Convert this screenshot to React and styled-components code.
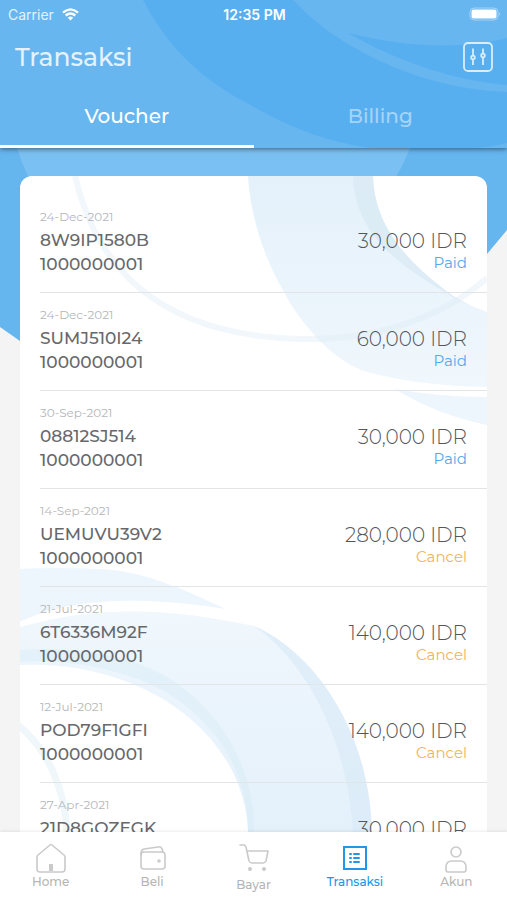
import { useState } from "react";
import styled, { createGlobalStyle } from "styled-components";

const GlobalStyle = createGlobalStyle`
    * {
        box-sizing: border-box;
    }

    body {
        margin: 0;
        background: #f4f4f4;
        font-family: Montserrat, Inter, "Open Sans", sans-serif;
    }

    button {
        font-family: inherit;
        background: none;
        border: 0;
        padding: 0;
        cursor: pointer;
    }
`;

const Screen = styled.div`
    display: flex;
    flex-direction: column;
    height: 100vh;
    overflow: hidden;
`;

const Backdrop = styled.svg`
    position: absolute;
    inset: 0;
    width: 100%;
    height: 100%;
    z-index: -1;
`;

const Header = styled.header`
    position: relative;
    z-index: 1;
    flex: none;
    isolation: isolate;
    color: #fff;
    box-shadow: 0 1px 5px rgba(0, 0, 0, 0.5);
`;

const StatusBar = styled.div`
    display: grid;
    grid-template-columns: 1fr auto 1fr;
    align-items: center;
    height: 28px;
    padding: 0 6px 0 8px;
    font-family: Inter, Roboto, sans-serif;
    font-size: 14px;
`;

const Carrier = styled.span`
    display: flex;
    align-items: center;
    gap: 8px;
    color: #e4f2fd;
`;

const Clock = styled.span`
    font-weight: 600;
`;

const Battery = styled.svg`
    justify-self: end;
`;

const TitleRow = styled.div`
    display: flex;
    align-items: center;
    justify-content: space-between;
    height: 58px;
    padding: 0 14px 0 15px;
`;

const Title = styled.h1`
    margin: 0;
    font-size: 25px;
    font-weight: 500;
    color: #e4f2fd;
`;

const FilterButton = styled.button`
    display: flex;
    color: #d8eefd;
`;

const Tabs = styled.div`
    display: flex;
    height: 62px;
`;

const Tab = styled.button`
    flex: 1;
    font-size: 20px;
    font-weight: 500;
    color: ${(props) => (props.$active ? "#fff" : "#a5d4f8")};
    border-bottom: 3px solid ${(props) => (props.$active ? "#fff" : "transparent")};
`;

const Content = styled.main`
    position: relative;
    isolation: isolate;
    flex: 1;
    min-height: 0;
    overflow: hidden;
    padding: 28px 20px 0;
`;

const Card = styled.section`
    position: relative;
    isolation: isolate;
    overflow: hidden;
    padding: 19px 0 0 20px;
    background: #fff;
    border-radius: 12px;
`;

const List = styled.ul`
    margin: 0;
    padding: 0;
    list-style: none;
`;

const Row = styled.li`
    display: flex;
    justify-content: space-between;
    height: 98px;
    padding: 14px 20px 0 0;
    border-bottom: 1px solid #e1e5e8;
`;

const Info = styled.div`
    display: flex;
    flex-direction: column;
    color: #66686b;
    font-size: 17px;
    font-weight: 500;
    line-height: 24px;
`;

const DateText = styled.time`
    margin-bottom: 3px;
    font-size: 12px;
    font-weight: 400;
    line-height: 16px;
    color: #b4b7ba;
`;

const Payment = styled.div`
    display: flex;
    flex-direction: column;
    align-items: flex-end;
    padding-top: 20px;
`;

const Amount = styled.span`
    font-size: 20px;
    font-weight: 300;
    line-height: 24px;
    color: #54565a;
`;

const Status = styled.span`
    font-size: 15px;
    line-height: 20px;
    color: ${(props) => (props.$status === "Paid" ? "#55a9ee" : "#efb45c")};
`;

const NavBar = styled.nav`
    display: flex;
    flex: none;
    height: 68px;
    background: #fff;
    box-shadow: 0 -1px 3px rgba(0, 0, 0, 0.08);
    position: relative;
`;

const NavItem = styled.a`
    flex: 1;
    display: flex;
    flex-direction: column;
    align-items: center;
    padding-top: 10px;
    font-size: 12px;
    line-height: 16px;
    font-weight: 500;
    text-decoration: none;
    color: ${(props) => (props.$active ? "#2196ea" : "#b5b5b5")};
`;

const NavIcon = styled.svg`
    flex: none;
    width: 32px;
    height: ${(props) => (props.$tall ? 35 : 32)}px;
    fill: none;
    stroke: ${(props) => (props.$active ? "#2196ea" : "#cacaca")};
    stroke-width: ${(props) => (props.$active ? 2 : 1.6)};
    stroke-linecap: round;
    stroke-linejoin: round;
`;

const transactions = [
    { date: "24-Dec-2021", code: "8W9IP1580B", amount: "30,000 IDR", status: "Paid" },
    { date: "24-Dec-2021", code: "SUMJ510I24", amount: "60,000 IDR", status: "Paid" },
    { date: "30-Sep-2021", code: "08812SJ514", amount: "30,000 IDR", status: "Paid" },
    { date: "14-Sep-2021", code: "UEMUVU39V2", amount: "280,000 IDR", status: "Cancel" },
    { date: "21-Jul-2021", code: "6T6336M92F", amount: "140,000 IDR", status: "Cancel" },
    { date: "12-Jul-2021", code: "POD79F1GFI", amount: "140,000 IDR", status: "Cancel" },
    { date: "27-Apr-2021", code: "21D8GOZEGK", amount: "30,000 IDR", status: "Cancel" },
];

const navItems = [
    {
        label: "Home",
        icon: (
            <>
                <path d="M2 15v12q0 3 3 3h22q3 0 3-3V15q0-1-1-2L17 3q-1-1-2 0L3 13q-1 1-1 2Z" />
                <path d="M16 22v7" strokeWidth="4" strokeLinecap="butt" />
            </>
        ),
    },
    {
        label: "Beli",
        icon: (
            <>
                <rect x="5" y="10" width="24" height="17" rx="3" />
                <path d="M5 13v-2q0-3 3-4l14-2q3-1 4 2l1 3" />
                <circle cx="23" cy="19" r="1" />
            </>
        ),
    },
    {
        label: "Bayar",
        tall: true,
        icon: (
            <>
                <path d="M2 3h4q1 0 2 2l3 14q1 2 3 2h11q2 0 3-2l2-10H9" />
                <circle cx="12" cy="27" r="1.2" fill="#cacaca" />
                <circle cx="26" cy="27" r="1.2" fill="#cacaca" />
            </>
        ),
    },
    {
        label: "Transaksi",
        icon: (
            <>
                <path d="M5 5h22v22H5Z" strokeLinejoin="miter" />
                <path d="M11 12h1M11 16h1M11 20h1M15 12h5M15 16h5M15 20h5" />
            </>
        ),
    },
    {
        label: "Akun",
        icon: (
            <>
                <circle cx="16" cy="10" r="5" />
                <path d="M6 28v-3q0-6 6-6h8q6 0 6 6v3q0 2-2 2H8q-2 0-2-2Z" />
            </>
        ),
    },
];

const HeaderArt = () => (
    <Backdrop viewBox="0 0 507 148" preserveAspectRatio="none" aria-hidden="true">
        <rect width="507" height="148" fill="#67b6ef" />
        <path d="M143 0C165 42 195 77 254 107C290 128 328 142 370 148H507V0Z" fill="#58aff0" />
        <path d="M293 0C315 22 332 35 350 45C400 75 455 90 507 92V85C450 80 395 60 348 33C405 47 460 50 507 38V0Z" fill="#67b6ef" />
        <path d="M475 148Q492 147 507 143V148Z" fill="#67b6ef" />
    </Backdrop>
);

const ContentArt = () => (
    <Backdrop viewBox="0 148 507 684" preserveAspectRatio="none" aria-hidden="true">
        <path d="M0 148H507V230L487 254Q420 335 253 390Q100 400 20 341L0 327Z" fill="#65b5ef" />
        <path d="M17 148H410Q398 180 375 205H45Q26 178 17 148Z" fill="#7bc0f2" />
    </Backdrop>
);

const CardArt = () => (
    <Backdrop viewBox="20 176 467 705" preserveAspectRatio="xMinYMin slice" aria-hidden="true">
        <defs>
            <linearGradient id="upper" x1="0" y1="0" x2="0" y2="1">
                <stop offset="0" stopColor="#e4f1fa" />
                <stop offset="1" stopColor="#f0f7fd" />
            </linearGradient>
            <linearGradient id="lower" x1="0" y1="0" x2="0" y2="1">
                <stop offset="0" stopColor="#f0f7fd" />
                <stop offset="1" stopColor="#e1effa" />
            </linearGradient>
        </defs>
        <path d="M248 176C250 216 265 260 284 292C307 335 342 365 367 372C405 382 445 386 487 387V312C464 304 449 294 440 286C404 258 374 223 373 176Z" fill="url(#upper)" />
        <path d="M353 176C355 222 380 255 445 292Q459 302 487 312C464 304 449 294 440 286C404 258 374 223 373 176Z" fill="#daeaf4" fillOpacity="0.8" />
        <path d="M395 389Q440 397 487 397V425Q435 414 395 389Z" fill="#edf5fd" />
        <path d="M75 176C95 260 150 335 300 339C380 341 445 315 487 278" fill="none" stroke="#dbeaf2" strokeOpacity="0.4" strokeWidth="6" />
        <path d="M20 569Q50 567 100 569C145 571 185 590 226 609C170 600 80 592 20 622Z" fill="#eef6fd" />
        <path d="M20 627C105 603 178 610 254 626C310 650 369 725 372 832V881H248V832C245 735 145 660 20 665Z" fill="url(#lower)" />
        <path d="M20 662C68 658 117 670 145 682C203 706 249 762 248 832L254 832C256 760 208 690 142 665Q85 645 20 650Z" fill="#d5eaf6" fillOpacity="0.4" />
        <path d="M254 626C310 650 369 725 372 832V881H353V832C348 745 310 665 254 626Z" fill="#d7eaf6" fillOpacity="0.6" />
        <path d="M18 725C47 748 66 790 67 835" fill="none" stroke="#eff7fb" strokeWidth="7" />
    </Backdrop>
);

const TransactionRow = ({ date, code, amount, status }) => (
    <Row>
        <Info>
            <DateText>{date}</DateText>
            <span>{code}</span>
            <span>1000000001</span>
        </Info>
        <Payment>
            <Amount>{amount}</Amount>
            <Status $status={status}>{status}</Status>
        </Payment>
    </Row>
);

export default function App() {
    const [tab, setTab] = useState("Voucher");

    return (
        <Screen>
            <GlobalStyle />
            <Header>
                <HeaderArt />
                <StatusBar>
                    <Carrier>
                        Carrier
                        <svg width="17" height="13" viewBox="0 0 17 13" fill="none" stroke="#fff" strokeWidth="2.3" aria-hidden="true">
                            <path d="M1 4.6Q8.5-1.8 16 4.6M3.7 7.5Q8.5 3.5 13.3 7.5" />
                            <path d="M8.5 12.5L5.8 9.7Q8.5 7.5 11.2 9.7Z" fill="#fff" stroke="none" />
                        </svg>
                    </Carrier>
                    <Clock>12:35 PM</Clock>
                    <Battery width="32" height="14" viewBox="0 0 32 14" aria-hidden="true">
                        <rect x="1" y="1" width="28" height="12" rx="4" fill="none" stroke="#a6d4f7" />
                        <rect x="2.5" y="2.5" width="25" height="9" rx="2" fill="#fff" />
                        <path d="M30 5q2 2 0 4Z" fill="#a6d4f7" />
                    </Battery>
                </StatusBar>
                <TitleRow>
                    <Title>Transaksi</Title>
                    <FilterButton aria-label="Filter">
                        <svg width="30" height="30" viewBox="0 0 30 30" fill="none" stroke="currentColor" strokeWidth="1.8">
                            <rect x="1" y="1" width="28" height="28" rx="4" />
                            <path d="M10 6.5V13M10 18V23M20 6.5V12M20 16V23" />
                            <circle cx="10" cy="15.5" r="1.8" />
                            <circle cx="20" cy="13.5" r="1.8" />
                        </svg>
                    </FilterButton>
                </TitleRow>
                <Tabs role="tablist">
                    {["Voucher", "Billing"].map((name) => (
                        <Tab
                            key={name}
                            role="tab"
                            aria-selected={tab === name}
                            $active={tab === name}
                            onClick={() => setTab(name)}
                        >
                            {name}
                        </Tab>
                    ))}
                </Tabs>
            </Header>
            <Content>
                <ContentArt />
                <Card>
                    <CardArt />
                    <List>
                        {transactions.map((item) => (
                            <TransactionRow key={item.code} {...item} />
                        ))}
                    </List>
                </Card>
            </Content>
            <NavBar>
                {navItems.map(({ label, icon, tall }) => (
                    <NavItem key={label} href={`#${label.toLowerCase()}`} $active={label === "Transaksi"}>
                        <NavIcon viewBox="0 0 32 32" preserveAspectRatio="xMidYMin" $tall={tall} $active={label === "Transaksi"} aria-hidden="true">
                            {icon}
                        </NavIcon>
                        {label}
                    </NavItem>
                ))}
            </NavBar>
        </Screen>
    );
}
